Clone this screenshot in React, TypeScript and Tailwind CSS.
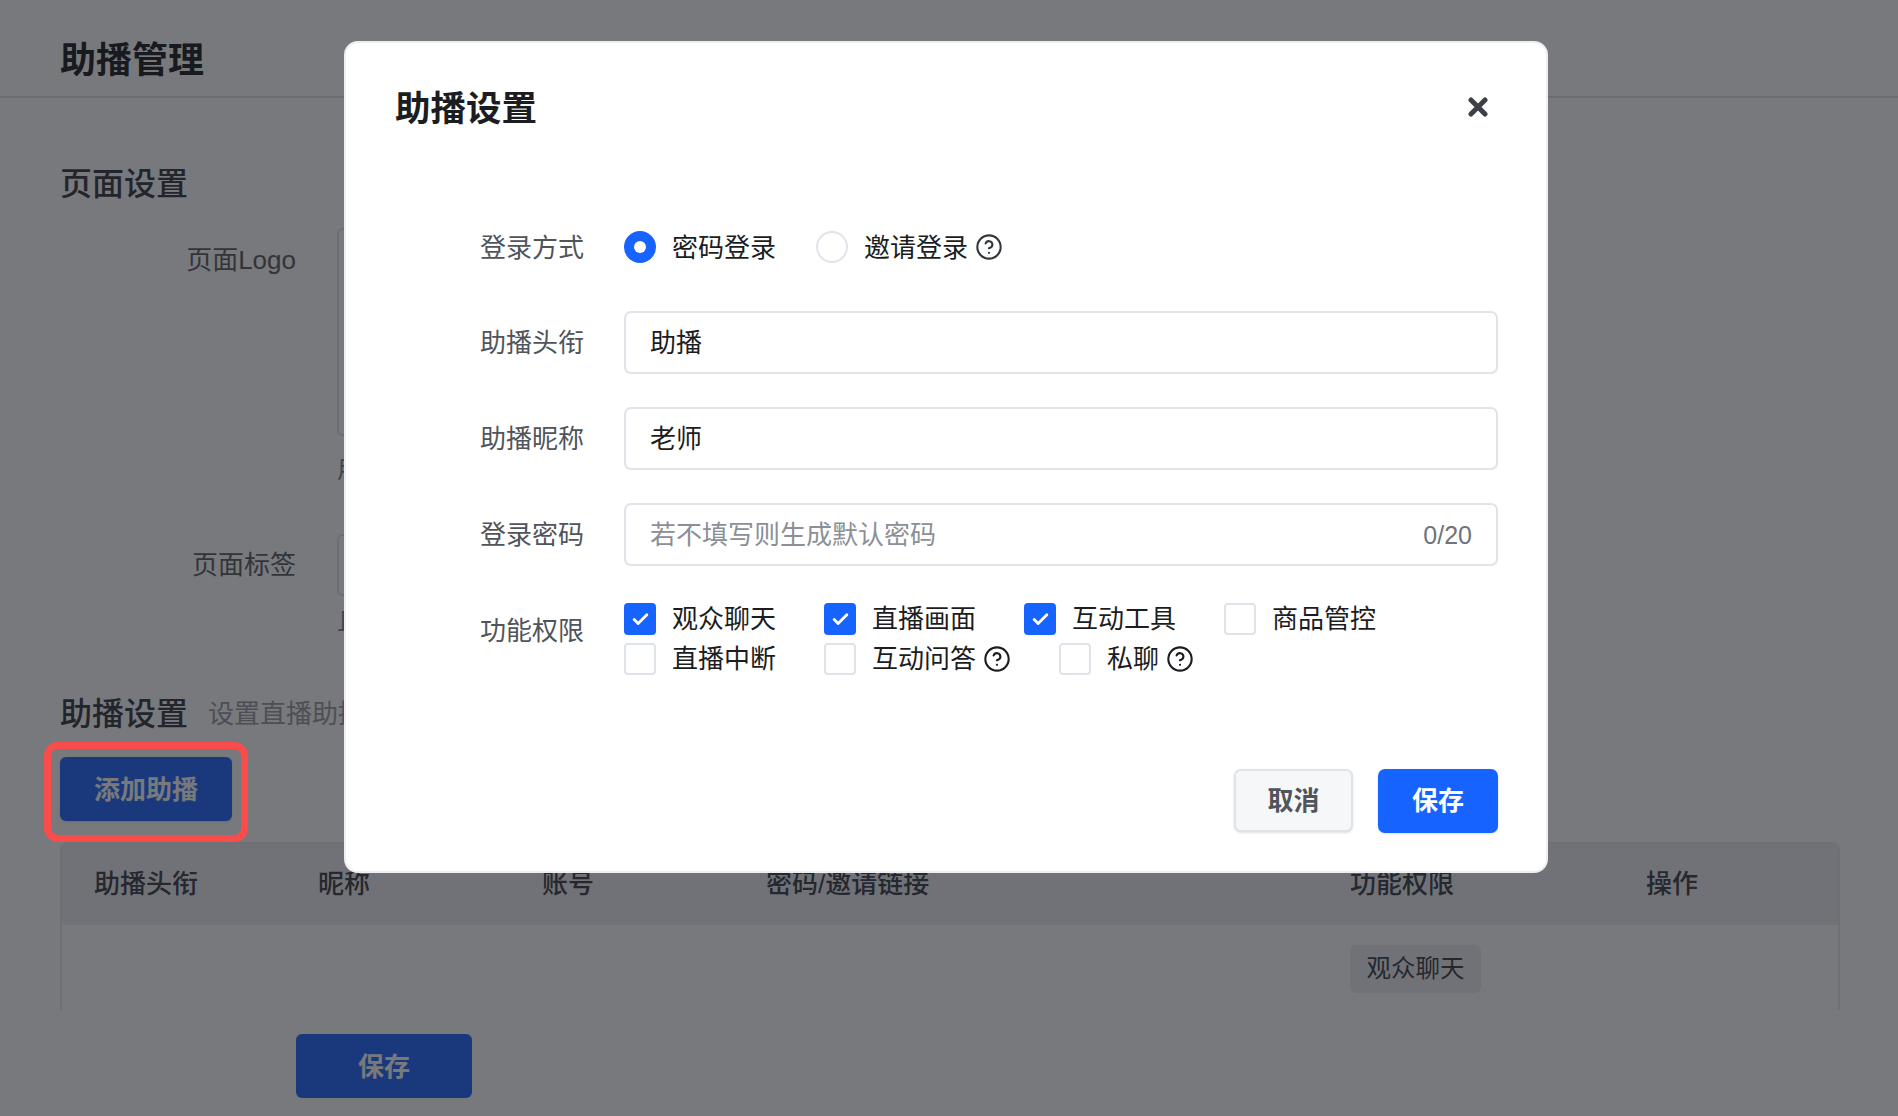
import { CircleHelp, Check } from "lucide-react";

const Help = ({ className = "text-[#33363c]" }: { className?: string }) => (
  <CircleHelp size={28} strokeWidth={1.8} className={`ml-[7px] shrink-0 ${className}`} />
);

const Box = ({ on }: { on?: boolean }) =>
  on ? (
    <span className="flex h-[32px] w-[32px] shrink-0 items-center justify-center rounded-[4px] bg-[#1763ff]">
      <Check size={19} strokeWidth={3.6} className="text-white" />
    </span>
  ) : (
    <span className="h-[32px] w-[32px] shrink-0 rounded-[4px] border-2 border-[#dfe3ea] bg-white" />
  );

const Perm = ({ text, on, help }: { text: string; on?: boolean; help?: boolean }) => (
  <div className="flex h-[32px] items-center">
    <Box on={on} />
    <span className="ml-[16px] whitespace-nowrap">{text}</span>
    {help && <Help className="text-[#1b1d21]" />}
  </div>
);

const Row = ({ label, children }: { label: string; children: React.ReactNode }) => (
  <div className="flex min-h-[62px] items-start gap-[40px]">
    <div className="h-[62px] w-[189px] text-right text-[26px] leading-[64px] text-[#50545b]">{label}</div>
    <div className="min-w-0 flex-1">{children}</div>
  </div>
);

const Field = ({ value, placeholder, count }: { value?: string; placeholder?: string; count?: string }) => (
  <div className="flex h-[63px] items-center justify-between rounded-[7px] border-2 border-[#dfe3ea] bg-white px-[24px] pt-[2px] text-[26px]">
    {value ? <span className="text-[#1b1d21]">{value}</span> : <span className="text-[#8b8f96]">{placeholder}</span>}
    {count && <span className="text-[25px] text-[#6f747c]">{count}</span>}
  </div>
);

export default function App() {
  return (
    <div className="relative flex h-[1116px] w-[1898px] flex-col overflow-hidden bg-white font-['Liberation_Sans','Noto_Sans_CJK_SC',sans-serif]">
      {/* page behind the dialog */}
      <header className="flex h-[98px] shrink-0 items-center border-b-2 border-[#e4e6ec] pl-[60px] pt-[26px] text-[36px] font-bold text-[#33363c]">
        助播管理
      </header>
      <main className="min-h-0 flex-1 overflow-hidden pl-[60px] pr-[58px]">
        <h2 className="mt-[66px] h-[40px] text-[32px] font-medium leading-[40px] text-[#4a4e56]">页面设置</h2>
        <div className="mt-[24px] flex gap-[41px]">
          <div className="w-[236px] text-right text-[26px] leading-[64px] text-[#6b6e74]">页面Logo</div>
          <div className="w-[500px]">
            <div className="h-[208px] rounded-[6px] border-2 border-[#e4e6ec]" />
            <div className="mt-[20px] h-[28px] text-[24px] leading-[28px] text-[#8b8f96]">用于页面展示</div>
          </div>
        </div>
        <div className="mt-[50px] flex gap-[41px]">
          <div className="w-[236px] text-right text-[26px] leading-[62px] text-[#6b6e74]">页面标签</div>
          <div className="w-[500px]">
            <div className="h-[62px] rounded-[6px] border-2 border-[#e4e6ec]" />
            <div className="mt-[12px] h-[28px] text-[24px] leading-[28px] text-[#8b8f96]">且不超过</div>
          </div>
        </div>
        <div className="mt-[58px] flex h-[40px] items-center">
          <h2 className="text-[32px] font-medium text-[#4a4e56]">助播设置</h2>
          <span className="ml-[20px] text-[26px] text-[#a3a6ac]">设置直播助播</span>
        </div>
        <div className="relative mt-[23px] w-fit">
          <button className="block h-[64px] w-[172px] rounded-[6px] bg-[#3778ff] pt-[2px] text-[26px] font-semibold text-white shadow-sm">
            添加助播
          </button>
          <div className="absolute -bottom-[21px] -left-[16px] -right-[16px] -top-[15px] z-20 rounded-[14px] border-[7px] border-[#fa4d4b]" />
        </div>
        <div className="mt-[21px] rounded-t-[8px] border-2 border-b-0 border-[#e9ebef] pb-[40px]">
          <div className="grid h-[81px] grid-cols-[224px_224px_224px_584px_296px_1fr] items-center bg-[#f0f1f5] pl-[32px] text-[26px] font-medium text-[#50545b]">
            <span>助播头衔</span>
            <span>昵称</span>
            <span>账号</span>
            <span>密码/邀请链接</span>
            <span>功能权限</span>
            <span>操作</span>
          </div>
          <div className="grid grid-cols-[224px_224px_224px_584px_296px_1fr] pl-[32px] pt-[20px]">
            <span className="col-start-5 flex h-[48px] w-[131px] items-center justify-center rounded-[6px] bg-[#f0f1f5] text-[24.5px] text-[#50545b]">
              观众聊天
            </span>
          </div>
        </div>
      </main>
      <footer className="flex h-[106px] shrink-0 items-start bg-white pl-[296px] pt-[24px]">
        <button className="h-[64px] w-[176px] rounded-[6px] bg-[#3778ff] pt-[2px] text-[26px] font-semibold text-white">
          保存
        </button>
      </footer>

      {/* overlay */}
      <div className="absolute inset-0 z-10 bg-[rgba(0,2,8,0.53)] pl-[344px] pt-[41px]">
        <div className="h-[832px] w-[1204px] rounded-[14px] border-2 border-[#eceef2] bg-white pl-[49px] pr-[48px] pt-[43px] text-[#1b1d21]">
          <div className="flex h-[44px] items-center justify-between">
            <h1 className="pt-[4px] text-[35.5px] font-bold text-[#1b1d21]">助播设置</h1>
            <svg width="20" height="20" viewBox="0 0 20 20" className="mb-[2px] mr-[10px] text-[#3c4047]">
              <path d="M3 3 17 17M17 3 3 17" stroke="currentColor" strokeWidth="5" strokeLinecap="round" />
            </svg>
          </div>
          <form className="mt-[86px] flex flex-col gap-[33px] text-[26px]">
            <Row label="登录方式">
              <div className="flex h-[62px] items-center">
                <span className="flex h-[32px] w-[32px] items-center justify-center rounded-full bg-[#1763ff]">
                  <span className="h-[12px] w-[12px] rounded-full bg-white" />
                </span>
                <span className="ml-[16px] pt-[2px]">密码登录</span>
                <span className="ml-[40px] h-[32px] w-[32px] rounded-full border-2 border-[#dfe3ea]" />
                <span className="ml-[16px] pt-[2px]">邀请登录</span>
                <Help />
              </div>
            </Row>
            <Row label="助播头衔">
              <Field value="助播" />
            </Row>
            <Row label="助播昵称">
              <Field value="老师" />
            </Row>
            <Row label="登录密码">
              <Field placeholder="若不填写则生成默认密码" count="0/20" />
            </Row>
            <Row label="功能权限">
              <div className="flex flex-col gap-[8px] pt-[4px]">
                <div className="flex gap-[48px]">
                  <Perm text="观众聊天" on />
                  <Perm text="直播画面" on />
                  <Perm text="互动工具" on />
                  <Perm text="商品管控" />
                </div>
                <div className="flex gap-[48px]">
                  <Perm text="直播中断" />
                  <Perm text="互动问答" help />
                  <Perm text="私聊" help />
                </div>
              </div>
            </Row>
          </form>
          <div className="mt-[94px] flex justify-end gap-[25px]">
            <button className="h-[63px] w-[119px] rounded-[7px] border-2 border-[#dfe3ea] bg-[#f6f7f9] pt-[2px] text-[26px] font-semibold text-[#50545b] shadow-sm">
              取消
            </button>
            <button className="h-[64px] w-[120px] rounded-[7px] bg-[#1763ff] text-[26px] font-semibold text-white shadow-sm">
              保存
            </button>
          </div>
        </div>
      </div>
    </div>
  );
}
